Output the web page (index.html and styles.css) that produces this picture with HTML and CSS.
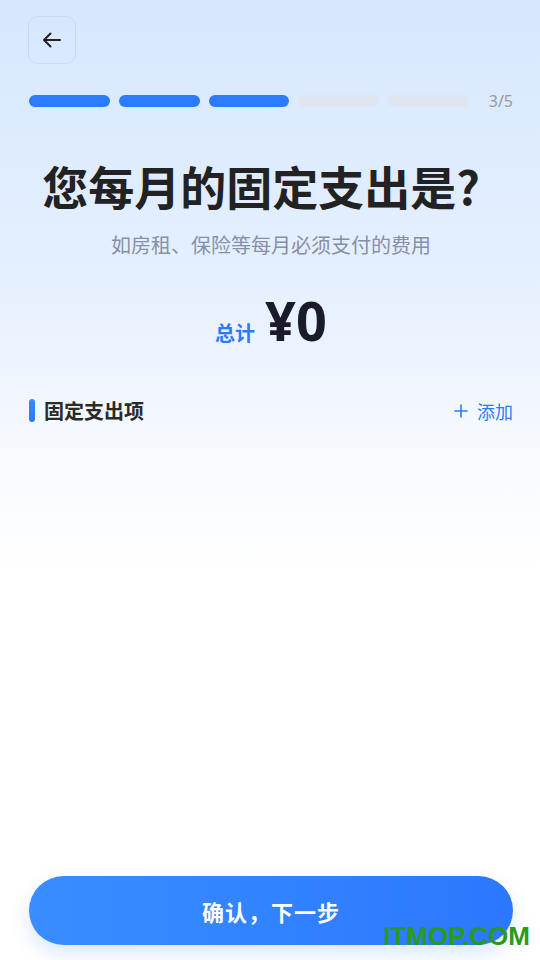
FILE: index.html
```html
<!DOCTYPE html>
<html lang="zh-CN">
<head>
    <meta charset="UTF-8">
    <meta name="viewport" content="width=device-width, initial-scale=1.0">
    <title>固定支出</title>
    <link rel="stylesheet" href="styles.css">
</head>
<body>
    <div class="pagina">
        <!-- topo com botão voltar -->
        <div class="topo">
            <div class="voltar">
                <svg width="24" height="24" viewBox="0 0 24 24" fill="none" stroke="#222" stroke-width="2" stroke-linecap="round" stroke-linejoin="round">
                    <path d="M20 12H4.5"/>
                    <path d="M10.5 5.5L4 12l6.5 6.5"/>
                </svg>
            </div>
        </div>

        <!-- progresso -->
        <div class="progresso">
            <div class="barras">
                <div class="barra ativa"></div>
                <div class="barra ativa"></div>
                <div class="barra ativa"></div>
                <div class="barra"></div>
                <div class="barra"></div>
            </div>
            <span class="passo">3/5</span>
        </div>

        <h1 class="titulo">您每月的固定支出是?</h1>
        <p class="subtitulo">如房租、保险等每月必须支付的费用</p>

        <div class="total">
            <span class="total-label">总计</span>
            <span class="total-valor">¥0</span>
        </div>

        <div class="secao">
            <div class="secao-titulo">
                <span class="marca"></span>
                固定支出项
            </div>
            <div class="adicionar">
                <svg width="14" height="14" viewBox="0 0 14 14" stroke="#2b7bff" stroke-width="1.6" stroke-linecap="round">
                    <path d="M7 1v12M1 7h12"/>
                </svg>
                添加
            </div>
        </div>

        <div class="espaco"></div>

        <div class="rodape">
            <button class="confirmar">确认，下一步</button>
        </div>
    </div>

    <div class="marca-dagua">ITMOP.COM</div>
</body>
</html>
```

FILE: styles.css
```css
body {
    margin: 0;
    padding: 0;
    font-family: "Noto Sans CJK SC", "Noto Sans", sans-serif;
    background: linear-gradient(180deg, #d6e7fe 0%, #e6f0fe 30%, #f5f9ff 45%, #ffffff 60%, #ffffff 100%);
    min-height: 960px;
    width: 540px;
    position: relative;
    overflow: hidden;
}

.pagina {
    display: flex;
    flex-direction: column;
    min-height: 960px;
    padding: 0 27px 0 29px;
    box-sizing: border-box;
}

.topo {
    padding-top: 16px;
    height: 48px;
}

.voltar {
    width: 48px;
    height: 48px;
    box-sizing: border-box;
    border: 1px solid rgba(0, 0, 0, 0.06);
    border-radius: 10px;
    display: flex;
    align-items: center;
    justify-content: center;
    margin-left: -1px;
}

.progresso {
    display: flex;
    align-items: center;
    margin-top: 31px;
}

.barras {
    display: flex;
    gap: 9px;
    width: 440px;
}

.barra {
    flex: 1;
    height: 12px;
    border-radius: 6px;
    background-color: #dfe6f0;
}

.barra.ativa {
    background-color: #2a7bff;
}

.passo {
    margin-left: auto;
    font-size: 16px;
    line-height: 12px;
    color: #9a9a9a;
    font-family: "Noto Sans", sans-serif;
}

.titulo {
    margin: 47px 0 0;
    padding-right: 20px;
    text-align: center;
    font-size: 46px;
    line-height: 62px;
    font-weight: 700;
    color: #222222;
}

.subtitulo {
    margin: 15px 0 0;
    text-align: center;
    font-size: 20px;
    line-height: 28px;
    color: #8790a8;
}

.total {
    display: flex;
    align-items: baseline;
    justify-content: center;
    gap: 10px;
    margin-top: 29px;
}

.total-label {
    font-size: 20px;
    font-weight: 700;
    color: #2b7bff;
}

.total-valor {
    font-size: 54px;
    line-height: 64px;
    font-weight: 700;
    color: #1a1c2c;
    font-family: "Noto Sans", sans-serif;
}

.secao {
    display: flex;
    align-items: center;
    justify-content: space-between;
    margin-top: 44px;
}

.secao-titulo {
    display: flex;
    align-items: center;
    gap: 9px;
    font-size: 20px;
    font-weight: 700;
    color: #2a2a2a;
}

.marca {
    width: 6px;
    height: 23px;
    border-radius: 3px;
    background: linear-gradient(180deg, #3a8cff, #2a78ff);
}

.adicionar {
    display: flex;
    align-items: center;
    gap: 9px;
    font-size: 18px;
    color: #2b7bff;
}

.espaco {
    flex: 1;
}

.rodape {
    padding-bottom: 15px;
}

.confirmar {
    width: 100%;
    height: 69px;
    border: none;
    border-radius: 35px;
    background: linear-gradient(90deg, #3a8dff, #2a78ff);
    color: white;
    font-family: "Noto Sans CJK SC", sans-serif;
    font-size: 22px;
    font-weight: 700;
    box-shadow: 0 8px 20px rgba(42, 120, 255, 0.18);
    letter-spacing: 1px;
}

.marca-dagua {
    position: absolute;
    right: 10px;
    bottom: 8px;
    font-family: "Liberation Sans", sans-serif;
    font-weight: 700;
    font-size: 26px;
    color: #2a9a1a;
}
```
